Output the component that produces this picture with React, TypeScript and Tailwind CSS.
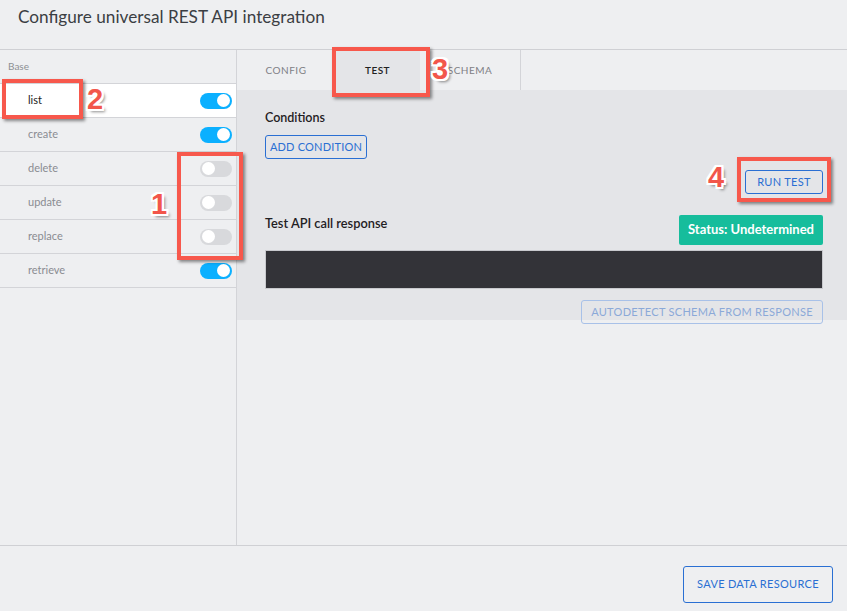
import React from "react";

function Toggle({ on }: { on: boolean }) {
  return on ? (
    <div className="w-[32px] h-[16px] rounded-full bg-[#0bb0ff] flex items-center justify-end pr-[2px]">
      <div className="w-[13px] h-[13px] rounded-full bg-white" />
    </div>
  ) : (
    <div className="w-[32px] h-[16px] rounded-full bg-[#d8d9dc] flex items-center justify-start pl-[2px]">
      <div className="w-[13px] h-[13px] rounded-full bg-white" />
    </div>
  );
}

const rows: { name: string; on: boolean; active?: boolean }[] = [
  { name: "list", on: true, active: true },
  { name: "create", on: true },
  { name: "delete", on: false },
  { name: "update", on: false },
  { name: "replace", on: false },
  { name: "retrieve", on: true },
];

const numShadow =
  "[text-shadow:2px_0_0_#fff,-2px_0_0_#fff,0_2px_0_#fff,0_-2px_0_#fff,2px_2px_0_#fff,-2px_-2px_0_#fff,2px_-2px_0_#fff,-2px_2px_0_#fff,3px_3px_3px_rgba(0,0,0,0.45)]";

function Num({ n, x, y }: { n: string; x: number; y: number }) {
  return (
    <span
      className={`absolute text-[29px] leading-none font-bold text-[#f2564b] font-['Liberation_Sans',sans-serif] ${numShadow}`}
      style={{ left: x, top: y }}
    >
      {n}
    </span>
  );
}

function Box({ x, y, w, h }: { x: number; y: number; w: number; h: number }) {
  return (
    <div
      className="absolute border-[4px] border-[#f7584c] shadow-[2px_2px_3px_rgba(0,0,0,0.45)]"
      style={{ left: x, top: y, width: w, height: h }}
    />
  );
}

export default function App() {
  return (
    <div className="relative w-[847px] h-[611px] bg-[#eeeff1] flex flex-col font-['Lato',sans-serif] overflow-hidden">
      <div className="h-[50px] shrink-0 border-b border-[#cfd0d4] px-[18px] pt-[5px]">
        <h1 className="text-[17.2px] leading-[24px] text-[#3b3e43]">
          Configure universal REST API integration
        </h1>
      </div>
      <div className="flex flex-1 min-h-0">
        <div className="w-[237px] shrink-0 border-r border-[#d3d4d8] flex flex-col">
          <div className="h-[34px] shrink-0 flex items-center pl-[8px] text-[10px] text-[#8d8f94] border-b border-[#d3d4d8]">
            Base
          </div>
          {rows.map((r) => (
            <div
              key={r.name}
              className={`h-[34px] shrink-0 flex items-center justify-between pl-[28px] pr-[4px] border-b border-[#d3d4d8] text-[11px] ${
                r.active ? "bg-white text-[#222]" : "text-[#8a8c91]"
              }`}
            >
              <span>{r.name}</span>
              <Toggle on={r.on} />
            </div>
          ))}
        </div>
        <div className="flex-1 flex flex-col">
          <div className="h-[40px] shrink-0 flex text-[10px] tracking-[0.5px] uppercase">
            <div className="w-[98px] flex items-center justify-center text-[#7e8085]">CONFIG</div>
            <div className="w-[85px] flex items-center justify-center bg-[#e4e5e8] text-[#222] font-semibold">TEST</div>
            <div className="w-[101px] flex items-center justify-center text-[#7e8085] border-r border-[#d3d4d8]">SCHEMA</div>
          </div>
          <div className="h-[230px] shrink-0 bg-[#e4e5e8] pl-[28px] pr-[24px] pt-[20px] flex flex-col">
            <div className="shrink-0 text-[12.5px] leading-[16px] font-semibold text-[#1f2023]">Conditions</div>
            <button className="shrink-0 mt-[9px] self-start w-[102px] h-[24px] border border-[#2a6fd3] rounded-[3px] text-[11px] text-[#2a6fd3] tracking-[0.2px]">
              ADD CONDITION
            </button>
            <button className="shrink-0 mt-[11px] self-end w-[78px] h-[24px] border border-[#2a6fd3] rounded-[3px] text-[11px] text-[#2a6fd3] tracking-[0.3px]">
              RUN TEST
            </button>
            <div className="shrink-0 mt-[21px] flex justify-between items-start">
              <div className="text-[12.8px] leading-[16px] font-semibold text-[#1f2023]">Test API call response</div>
              <div className="w-[144px] h-[30px] bg-[#16bd9c] rounded-[2px] flex items-center justify-center text-white text-[13px] font-bold">
                Status: Undetermined
              </div>
            </div>
            <div className="shrink-0 mt-[5px] h-[39px] bg-[#333338] border border-[#c8c9cd]" />
            <button className="shrink-0 mt-[11px] self-end w-[242px] h-[24px] border border-[#a8c1e8] rounded-[3px] text-[11px] text-[#8ba9d8] tracking-[0.3px]">
              AUTODETECT SCHEMA FROM RESPONSE
            </button>
          </div>
        </div>
      </div>
      <div className="h-[66px] shrink-0 border-t border-[#cfd0d4] flex items-start justify-end pr-[14px] pt-[20px]">
        <button className="w-[150px] h-[37px] border border-[#2a6fd3] rounded-[3px] text-[11px] text-[#2a6fd3] tracking-[0.3px] bg-transparent">
          SAVE DATA RESOURCE
        </button>
      </div>

      <Box x={2} y={79} w={81} h={40} />
      <Num n="2" x={87} y={85} />
      <Box x={177} y={152} w={66} h={108} />
      <Num n="1" x={151} y={190} />
      <Box x={332} y={47} w={98} h={50} />
      <Num n="3" x={432} y={55} />
      <Box x={737} y={157} w={94} h={45} />
      <Num n="4" x={708} y={163} />
    </div>
  );
}
